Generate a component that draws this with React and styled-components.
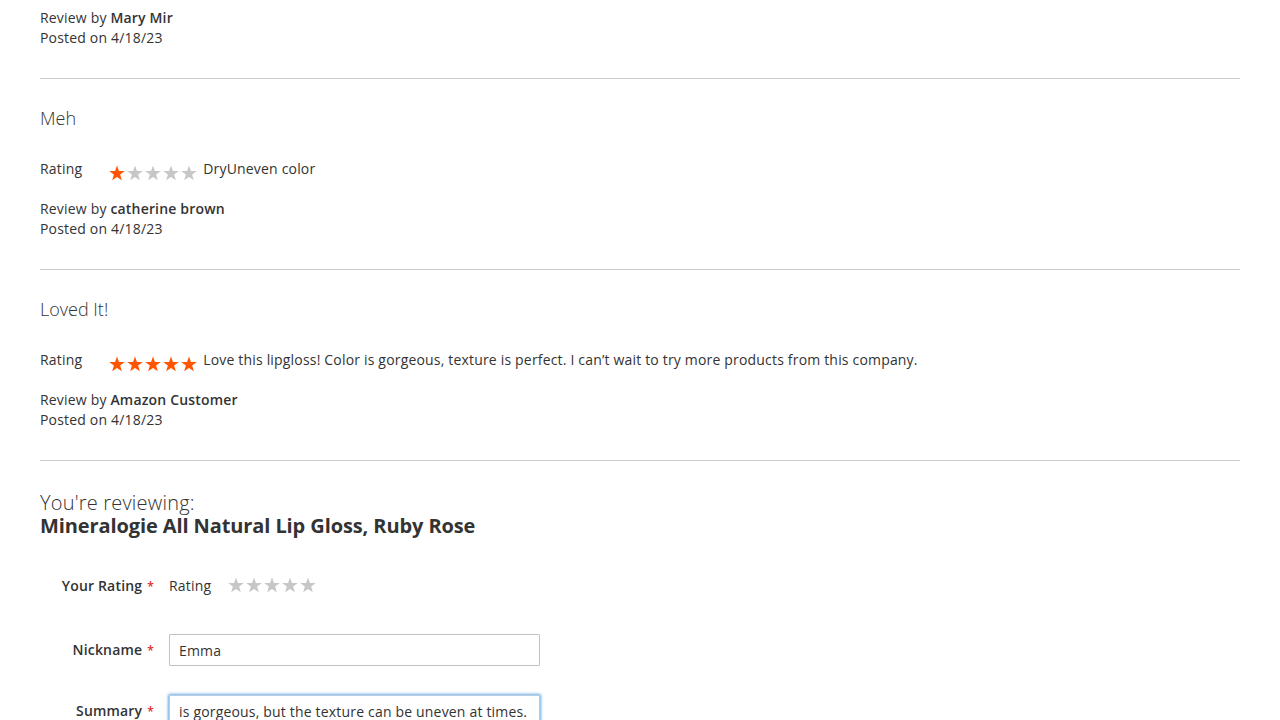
import React, { useEffect, useRef } from "react";
import styled, { createGlobalStyle } from "styled-components";

const Global = createGlobalStyle`
  html, body { margin: 0; padding: 0; overflow: hidden; background: #fff; }
  body {
    font-family: "Open Sans", "Helvetica Neue", Helvetica, Arial, sans-serif;
    font-size: 14px;
    line-height: 20px;
    letter-spacing: 0.18px;
    color: #333;
  }
  * { box-sizing: border-box; }
`;

const Page = styled.main`
  padding: 0 40px;
  height: 720px;
  overflow: hidden;
`;

const ReviewList = styled.ol`
  list-style: none;
  margin: 0;
  padding: 0;
`;

const ReviewItem = styled.li`
  margin: 0;
  padding: ${(p) => (p.$partial ? "8px 0 30px" : "29px 0 30px")};
  border-bottom: 1px solid #cccccc;
`;

const ReviewTitle = styled.div`
  font-size: 18px;
  font-weight: 300;
  line-height: 20px;
  letter-spacing: 0;
  margin: 0 0 21px;
  color: #333;
`;

const RatingRow = styled.div`
  display: flex;
  align-items: flex-start;
  padding-top: 10px;
  height: 50px;
`;

const RatingLabel = styled.span`
  padding-right: 26px;
`;

const StarsWrap = styled.span`
  display: inline-flex;
  margin-top: ${(p) => p.$offset || 0}px;
  height: 16px;
`;

const StarSvg = styled.svg`
  display: block;
  width: 18px;
  height: 16px;
`;

const ReviewContent = styled.div`
  margin-left: 5px;
`;

const Details = styled.div``;

const DetailLine = styled.p`
  margin: 0;
  strong { font-weight: 600; }
`;

const ReviewForm = styled.form`
  max-width: 500px;
  margin-top: 30px;
`;

const Legend = styled.div`
  font-size: 20px;
  line-height: 23px;
  font-weight: 300;
  letter-spacing: 0.2px;
  margin-bottom: 33px;
  white-space: nowrap;
  strong { display: block; font-weight: 700; letter-spacing: -0.1px; }
`;

const Field = styled.div`
  display: grid;
  grid-template-columns: 25.8% 74.2%;
  margin-bottom: 29px;
  min-height: ${(p) => p.$minH || 0}px;
`;

const FieldLabel = styled.label`
  padding: 6px 15px 0 0;
  text-align: right;
  font-weight: 600;
  &::after {
    content: "*";
    color: #e02b27;
    font-size: 12px;
    margin-left: 5px;
  }
`;

const VoteControl = styled.div`
  display: flex;
  align-items: flex-start;
  padding-top: 6px;
`;

const VoteLabel = styled.span`
  padding-right: 16px;
`;

const TextInput = styled.input`
  width: 100%;
  height: 32px;
  padding: 0 9px;
  border: 1px solid ${(p) => (p.$focused ? "#b7cde3" : "#c2c2c2")};
  border-radius: 1px;
  font-family: "Open Sans", "Helvetica Neue", Helvetica, Arial, sans-serif;
  font-size: 14px;
  letter-spacing: 0.18px;
  color: #333;
  background: #fff;
  outline: none;
  box-shadow: ${(p) => (p.$focused ? "0 0 3px 1px #68a8e0" : "none")};
`;

const TextArea = styled.textarea`
  width: 100%;
  height: 120px;
  padding: 9px;
  border: 1px solid #c2c2c2;
  font-family: "Open Sans", sans-serif;
  font-size: 14px;
  color: #333;
  resize: vertical;
`;

const STAR_POINTS =
  "9,0.4 10.94,5.93 16.8,6.07 12.14,9.62 13.82,15.23 9,11.9 4.18,15.23 5.86,9.62 1.2,6.07 7.06,5.93";

function Stars({ value, offset }) {
  return (
    <StarsWrap $offset={offset} aria-label={`${value} of 5`}>
      {[0, 1, 2, 3, 4].map((i) => (
        <StarSvg key={i} viewBox="0 0 18 16">
          <polygon points={STAR_POINTS} fill={i < value ? "#ff5501" : "#c7c7c7"} />
        </StarSvg>
      ))}
    </StarsWrap>
  );
}

function Review({ title, rating, content, author }) {
  return (
    <ReviewItem>
      <ReviewTitle>{title}</ReviewTitle>
      <RatingRow>
        <RatingLabel>Rating</RatingLabel>
        <Stars value={rating} offset={6} />
        <ReviewContent>{content}</ReviewContent>
      </RatingRow>
      <Details>
        <DetailLine>
          Review by <strong>{author}</strong>
        </DetailLine>
        <DetailLine>Posted on 4/18/23</DetailLine>
      </Details>
    </ReviewItem>
  );
}

export default function App() {
  const summaryRef = useRef(null);
  useEffect(() => {
    const el = summaryRef.current;
    if (el) {
      el.focus({ preventScroll: true });
      const n = el.value.length;
      el.setSelectionRange(n, n);
      el.scrollLeft = el.scrollWidth;
    }
  }, []);

  return (
    <>
      <Global />
      <Page>
        <ReviewList>
          <ReviewItem $partial>
            <Details>
              <DetailLine>
                Review by <strong>Mary Mir</strong>
              </DetailLine>
              <DetailLine>Posted on 4/18/23</DetailLine>
            </Details>
          </ReviewItem>
          <Review title="Meh" rating={1} content="DryUneven color" author="catherine brown" />
          <Review
            title="Loved It!"
            rating={5}
            content="Love this lipgloss! Color is gorgeous, texture is perfect. I can’t wait to try more products from this company."
            author="Amazon Customer"
          />
        </ReviewList>

        <ReviewForm onSubmit={(e) => e.preventDefault()}>
          <Legend>
            You're reviewing:
            <strong>Mineralogie All Natural Lip Gloss, Ruby Rose</strong>
          </Legend>
          <Field $minH={35}>
            <FieldLabel>Your Rating</FieldLabel>
            <VoteControl>
              <VoteLabel>Rating</VoteLabel>
              <Stars value={0} offset={1} />
            </VoteControl>
          </Field>
          <Field>
            <FieldLabel htmlFor="nickname">Nickname</FieldLabel>
            <TextInput id="nickname" defaultValue="Emma" />
          </Field>
          <Field>
            <FieldLabel htmlFor="summary">Summary</FieldLabel>
            <TextInput
              id="summary"
              ref={summaryRef}
              $focused
              defaultValue="is gorgeous, but the texture can be uneven at times."
            />
          </Field>
          <Field>
            <FieldLabel htmlFor="review">Review</FieldLabel>
            <TextArea id="review" />
          </Field>
        </ReviewForm>
      </Page>
    </>
  );
}
